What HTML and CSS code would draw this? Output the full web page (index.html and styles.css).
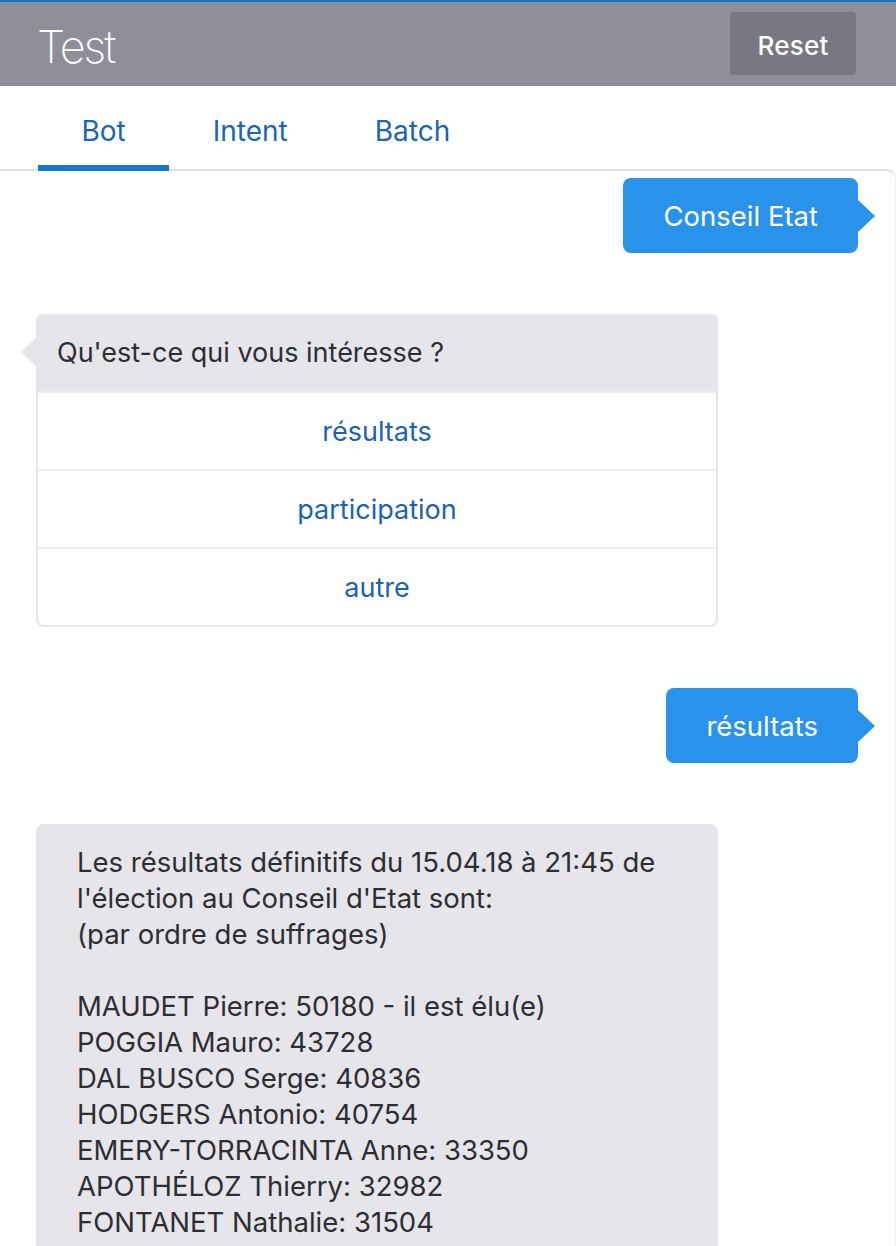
FILE: index.html
```html
<!DOCTYPE html>
<html lang="fr">
<head>
<meta charset="utf-8">
<title>Test</title>
<link rel="stylesheet" href="styles.css">
</head>
<body>
<header class="topbar">
  <h1 class="title">Test</h1>
  <button class="reset">Reset</button>
</header>
<nav class="tabs">
  <a class="tab active">Bot</a>
  <a class="tab">Intent</a>
  <a class="tab">Batch</a>
</nav>
<main class="chat">
  <div class="msg user"><div class="bubble user-bubble">Conseil Etat</div></div>
  <div class="msg bot">
    <div class="card">
      <div class="card-head">Qu'est-ce qui vous intéresse ?</div>
      <div class="choice">résultats</div>
      <div class="choice">participation</div>
      <div class="choice">autre</div>
    </div>
  </div>
  <div class="msg user"><div class="bubble user-bubble">résultats</div></div>
  <div class="msg bot">
    <div class="text-bubble">Les résultats définitifs du 15.04.18 à 21:45 de
l'élection au Conseil d'Etat sont:
(par ordre de suffrages)

MAUDET Pierre: 50180 - il est élu(e)
POGGIA Mauro: 43728
DAL BUSCO Serge: 40836
HODGERS Antonio: 40754
EMERY-TORRACINTA Anne: 33350
APOTHÉLOZ Thierry: 32982
FONTANET Nathalie: 31504</div>
  </div>
</main>
</body>
</html>
```
FILE: styles.css
```css
html, body {
  margin: 0;
  padding: 0;
  background: #ffffff;
  font-family: "Inter", "Liberation Sans", sans-serif;
  color: #2e2e31;
  overflow: hidden;
}

.topbar {
  height: 84px;
  border-top: 2px solid #1a73c9;
  background: #8e8f9a;
  display: flex;
  align-items: center;
  justify-content: space-between;
  padding: 0 40px 0 37px;
}

.title {
  margin: 0;
  font-size: 45px;
  font-weight: 200;
  color: #ffffff;
  letter-spacing: -2px;
  margin-top: 4px;
}

.reset {
  width: 126px;
  height: 63px;
  border: none;
  border-radius: 4px;
  background: #777882;
  color: #ffffff;
  font-family: inherit;
  font-size: 26px;
  font-weight: 500;
  letter-spacing: 0.2px;
  margin-top: -2px;
  padding: 4px 0 0 0;
}

.tabs {
  height: 85px;
  display: flex;
  padding-left: 38px;
  box-sizing: border-box;
}

.tab {
  display: flex;
  align-items: center;
  padding: 10px 43.5px 0 43.5px;
  font-size: 28px;
  color: #1866b4;
  border-bottom: 6px solid transparent;
}

.tab.active {
  border-bottom-color: #1976d2;
}

.chat {
  border-top: 2px solid #dde2e8;
  border-right: 2px solid #eef0f3;
  border-top-right-radius: 10px;
  margin-top: -2px;
  margin-right: -1px;
  padding-top: 7px;
  display: flex;
  flex-direction: column;
  gap: 61px;
}

.msg {
  display: flex;
}

.msg.user {
  justify-content: flex-end;
  padding-right: 37px;
}

.msg.bot {
  padding-left: 36px;
}

.bubble {
  position: relative;
  height: 75px;
  display: flex;
  align-items: center;
  padding: 0 40px;
  border-radius: 8px;
  font-size: 27.5px;
}

.user-bubble {
  background: #2993ec;
  color: #ffffff;
}

.user-bubble::after {
  content: "";
  position: absolute;
  right: -17px;
  top: 50%;
  margin-top: -16px;
  border-top: 16px solid transparent;
  border-bottom: 16px solid transparent;
  border-left: 17px solid #2993ec;
}

.card {
  position: relative;
  width: 682px;
  box-sizing: border-box;
  border: 2px solid #e5e5ea;
  border-radius: 8px;
  background: #ffffff;
}

.card::before {
  content: "";
  position: absolute;
  left: -17px;
  top: 20px;
  border-top: 16px solid transparent;
  border-bottom: 16px solid transparent;
  border-right: 17px solid #e5e5ea;
}

.card-head {
  height: 77px;
  background: #e5e5ea;
  display: flex;
  align-items: center;
  padding-left: 21px;
  font-size: 27px;
  border-radius: 6px 6px 0 0;
  margin: -2px -2px 0 -2px;
}

.choice {
  height: 76px;
  display: flex;
  align-items: center;
  justify-content: center;
  font-size: 27px;
  color: #1a63b2;
  border-top: 2px solid #ececee;
}

.text-bubble {
  position: relative;
  width: 682px;
  box-sizing: border-box;
  background: #e5e5ea;
  border-radius: 8px;
  padding: 20px 30px 20px 41px;
  font-size: 27.5px;
  line-height: 36px;
  white-space: pre-line;
}
```
